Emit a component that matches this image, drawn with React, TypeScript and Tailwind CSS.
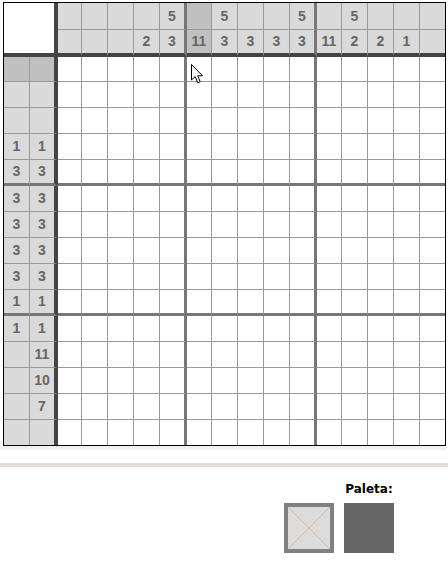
const colW = ['w-[24px]', 'w-[26px]', 'w-[26px]', 'w-[26px]', 'w-[27px]', 'w-[25px]', 'w-[26px]', 'w-[26px]', 'w-[26px]', 'w-[27px]', 'w-[25px]', 'w-[26px]', 'w-[26px]', 'w-[26px]', 'w-[25px]'];
const colR = (i: number) =>
  i === 4 || i === 9 ? 'border-r-[3px] border-r-[#777]' : i === 14 ? '' : 'border-r border-r-[#999]';

const rowH = ['h-[25px]', 'h-[26px]', 'h-[26px]', 'h-[26px]', 'h-[26px]', 'h-[26px]', 'h-[26px]', 'h-[26px]', 'h-[26px]', 'h-[26px]', 'h-[26px]', 'h-[26px]', 'h-[26px]', 'h-[26px]', 'h-[25px]'];
const rowB = (i: number) =>
  i === 4 || i === 9 ? 'border-b-[3px] border-b-[#777]' : i === 14 ? '' : 'border-b border-b-[#999]';

// column clues: [top, bottom]
const colClues: [string, string][] = [
  ['', ''], ['', ''], ['', ''], ['', '2'], ['5', '3'],
  ['', '11'], ['5', '3'], ['', '3'], ['', '3'], ['5', '3'],
  ['', '11'], ['5', '2'], ['', '2'], ['', '1'], ['', ''],
];

// row clues: [left, right]
const rowClues: [string, string][] = [
  ['', ''], ['', ''], ['', ''], ['1', '1'], ['3', '3'],
  ['3', '3'], ['3', '3'], ['3', '3'], ['3', '3'], ['1', '1'],
  ['1', '1'], ['', '11'], ['', '10'], ['', '7'], ['', ''],
];

const clueText = "flex items-center justify-center font-['Liberation_Sans',Arial,sans-serif] text-[14px] font-bold text-[#666]";

export default function App() {
  return (
    <div className="w-[448px] h-[570px] bg-white overflow-hidden font-['Liberation_Sans',Arial,sans-serif]">
      {/* board */}
      <div className="relative ml-[3px] mt-[2px] w-fit border border-black">
        <div className="flex">
          <div className="w-[54px] h-[54px] bg-white border-r-4 border-b-4 border-[#444]" />
          <div className="flex flex-col">
            <div className="flex">
              {colClues.map((c, i) => (
                <div
                  key={i}
                  className={`${colW[i]} h-[27px] border-b border-b-[#999] ${colR(i)} ${i === 5 ? 'bg-[#c0c0c0]' : 'bg-[#dadada]'} ${clueText}`}
                >
                  {c[0]}
                </div>
              ))}
            </div>
            <div className="flex">
              {colClues.map((c, i) => (
                <div
                  key={i}
                  className={`${colW[i]} h-[27px] border-b-4 border-b-[#444] ${colR(i)} ${i === 5 ? 'bg-[#c0c0c0]' : 'bg-[#dadada]'} ${clueText}`}
                >
                  {c[1]}
                </div>
              ))}
            </div>
          </div>
        </div>

        {rowClues.map((r, ri) => (
          <div key={ri} className="flex">
            <div className={`w-[26px] ${rowH[ri]} ${rowB(ri)} border-r border-r-[#999] ${ri === 0 ? 'bg-[#c0c0c0]' : 'bg-[#dadada]'} ${clueText}`}>
              {r[0]}
            </div>
            <div className={`w-[28px] ${rowH[ri]} ${rowB(ri)} border-r-4 border-r-[#444] ${ri === 0 ? 'bg-[#c0c0c0]' : 'bg-[#dadada]'} ${clueText}`}>
              {r[1]}
            </div>
            {colW.map((w, ci) => (
              <div key={ci} className={`${w} ${rowH[ri]} ${rowB(ri)} ${colR(ci)} bg-white`} />
            ))}
          </div>
        ))}

        {/* mouse pointer */}
        <svg className="absolute left-[187px] top-[61px]" width="13" height="20" viewBox="0 0 13 20">
          <path d="M0.5 0.5 L0.5 16 L4.2 12.6 L6.8 18.8 L9.2 17.8 L6.7 11.8 L11.5 11.8 Z" fill="#fff" stroke="#000" strokeWidth="1" strokeLinejoin="miter" />
        </svg>
      </div>

      <div className="h-[4px] w-[447px] bg-[#f0f0f0]" />
      <div className="mt-[13px] h-[4px] w-full bg-[#e2dfda]" />

      {/* palette */}
      <div className="mt-[14px] flex items-end justify-end gap-[10px] pr-[54px]">
        <div className="relative w-[50px] h-[50px] border-4 border-[#808080] bg-[#dcdcdc]">
          <svg className="absolute inset-0" width="42" height="42" viewBox="0 0 42 42">
            <line x1="0.5" y1="0.5" x2="41.5" y2="41.5" stroke="#e6b294" strokeWidth="1" />
            <line x1="41.5" y1="0.5" x2="0.5" y2="41.5" stroke="#e6b294" strokeWidth="1" />
          </svg>
        </div>
        <div className="flex flex-col items-center">
          <div className="h-[17px] mb-[5px] font-['DejaVu_Sans',Verdana,sans-serif] text-[12px] leading-[17px] font-bold text-black">
            Paleta:
          </div>
          <div className="w-[50px] h-[50px] bg-[#666]" />
        </div>
      </div>
    </div>
  );
}
